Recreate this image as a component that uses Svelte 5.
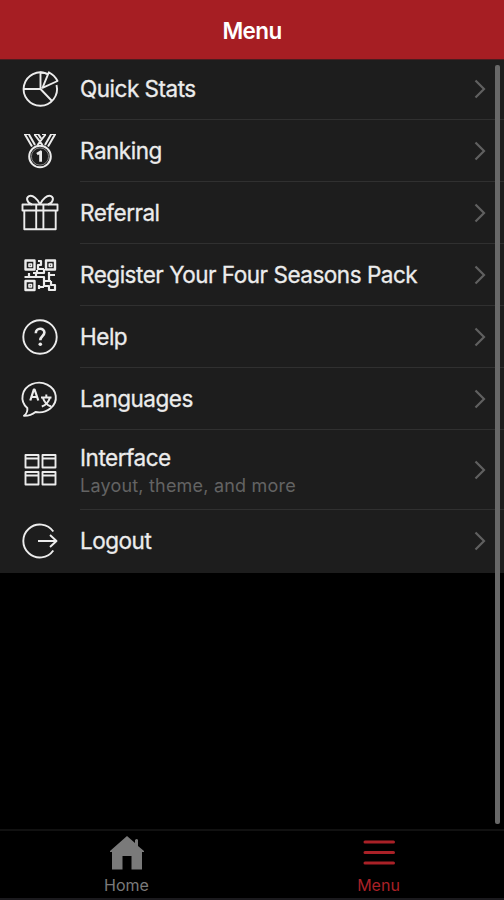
<script>
  const items = [
    { icon: 'stats', label: 'Quick Stats' },
    { icon: 'ranking', label: 'Ranking' },
    { icon: 'referral', label: 'Referral' },
    { icon: 'register', label: 'Register Your Four Seasons Pack' },
    { icon: 'help', label: 'Help' },
    { icon: 'languages', label: 'Languages' },
    { icon: 'interface', label: 'Interface', detail: 'Layout, theme, and more' },
    { icon: 'logout', label: 'Logout' }
  ];
</script>

<div class="screen">
  <header>
    <h1>Menu</h1>
  </header>

  <main>
    <ul class="menu">
      {#each items as item}
        <li class="row" class:tall={item.detail}>
          <svg class="icon" viewBox="0 0 40 40">
            {#if item.icon === 'stats'}
              <path d="M27.500 5A16.700 16.700 0 1 0 36.500 16" />
              <path d="M27.500 5Q24 3.500 20.500 3.500V20H3.500M20.500 20L32 32M22.500 18.800L28.800 3.300Q34.500 6 37.500 12Z" />
            {:else if item.icon === 'ranking'}
              <path d="M5 3.500l7 12M9 3.500l6 10.500M14.500 3.500l8 10.500M18.500 3.500l2.500 4M35 3.500l-7 12M31 3.500l-6 10.500M25.500 3.500l-8 10.500" stroke-width="2" />
              <path d="M4 3.500h6M30 3.500h6M14 3.500h5M22 3.500h4" stroke-width="1.200" />
              <circle cx="20" cy="25.500" r="10.800" stroke-width="2" />
              <circle cx="20" cy="25.500" r="8.600" stroke-width="1" opacity="0.5" />
              <path d="M17 23.200l3.600-2.400v10" stroke-width="2.800" />
            {:else if item.icon === 'referral'}
              <path d="M2.500 11.500h35v6h-35zM4.300 17.500h31.400v18.700H4.300zM16.200 11.500v24.700M23.400 11.500v24.700" />
              <path d="M20 11.500C18 6 12.500 1.500 9 3.200S7 10 12 11.500M20 11.500C22 6 27.500 1.500 31 3.200S33 10 28 11.500" />
            {:else if item.icon === 'register'}
              <path d="M5.500 5.500h9v9h-9zM26 5.500h9v9h-9zM5.500 26h9v9h-9z" stroke-width="2.400" />
              <path d="M9 9h2.500v2.500H9zM29.300 9h2.500v2.500h-2.500zM9 29.500h2.500V32H9z" stroke-width="1.600" />
              <path d="M18 6h3v4h-3v4h6M24 14v4h-7v-3M13 18h5M9 18v4h7v-3M4.500 22h5M16 22h8v4h7M29 17v9M35 20h-6M31 26v4h4v5h-6v-4h-5v-5M19 32h5M19 30v4" stroke-width="2.200" />
            {:else if item.icon === 'help'}
              <circle cx="20" cy="20" r="16.700" />
              <path d="M15.800 16.200C15.800 10.300 24.400 10.500 24.400 15.600C24.400 19 20.300 19 20.300 23.300" stroke-width="2.600" />
              <circle class="solid" cx="20.300" cy="27.300" r="1.800" />
            {:else if item.icon === 'languages'}
              <path d="M7.300 29A16.700 14.800 0 1 1 15.500 33Q10.500 37 4 36.800Q8 33.500 7.300 29Z" />
              <path d="M10.300 21.500l3.500-11h.8l3.700 11M11.700 18h5.300" stroke-width="2.200" />
              <path d="M21 18.500h10.500M26.300 15.500v3M23 19q2 6.500 8 8.500M29.800 19q-2 6.500-8 8.500" stroke-width="2" />
            {:else if item.icon === 'interface'}
              <path d="M5.500 5h13v12.500h-13zM5.500 8.500h13M22.500 5h13v12.500h-13zM22.500 8.500h13M5.500 22h13v12.500h-13zM5.500 25.500h13M22.500 22h13v12.500h-13zM22.500 25.500h13" />
            {:else if item.icon === 'logout'}
              <path d="M33.300 10.500A16.500 16.500 0 1 0 33.300 29.500M18 20h18M30 14l6.500 6l-6.500 6" />
            {/if}
          </svg>

          <div class="content">
            <div class="text">
              <span class="label">{item.label}</span>
              {#if item.detail}
                <span class="detail">{item.detail}</span>
              {/if}
            </div>
            <svg class="chevron" viewBox="0 0 12 20">
              <path d="M1.500 1.500L10 10L1.500 18.500" />
            </svg>
          </div>
        </li>
      {/each}
    </ul>
    <div class="scrollbar"></div>
  </main>

  <nav>
    <div class="tab">
      <svg viewBox="0 0 36 34">
        <path class="solid" d="M18 0L26 7V4q2-2 3 0v6L35 15v1H33V33.500H22.500V20H13.500V33.500H3V16H1v-1Z" />
      </svg>
      <span>Home</span>
    </div>
    <div class="tab active">
      <svg viewBox="0 0 36 34">
        <path d="M4 6h28.500M4 16.500h28.500M4 27h28.500" />
      </svg>
      <span>Menu</span>
    </div>
  </nav>
</div>

<style>
  :global(body) {
    background: #000;
  }

  .screen {
    display: flex;
    flex-direction: column;
    height: 900px;
    background: #000;
    font-family: Inter, 'Liberation Sans', sans-serif;
    color: #ececec;
  }

  header {
    display: flex;
    align-items: center;
    justify-content: center;
    box-sizing: border-box;
    height: 60px;
    padding-top: 2px;
    background: #a61e23;
    border-bottom: 1px solid #4b1c1f;
  }

  h1 {
    margin: 0;
    font-size: 22.5px;
    line-height: 28px;
    font-weight: 600;
    letter-spacing: -0.6px;
    color: #fff;
  }

  main {
    position: relative;
    flex: 1;
  }

  .menu {
    margin: 0;
    padding: 0;
    list-style: none;
    background: #1d1d1d;
  }

  .row {
    display: flex;
    align-items: center;
    box-sizing: border-box;
    height: 62px;
    padding-left: 20px;
  }

  .row:first-child {
    height: 60px;
  }

  .row:first-child .icon,
  .row:first-child .text,
  .row:first-child .chevron {
    margin-bottom: 2px;
  }

  .row.tall {
    height: 80px;
  }

  .row:last-child {
    height: 63px;
    padding-bottom: 2px;
  }

  svg {
    display: block;
    flex: none;
    fill: none;
    stroke: currentColor;
    stroke-width: 1.9;
    stroke-linejoin: round;
  }

  .solid {
    fill: currentColor;
    stroke: none;
  }

  .icon {
    width: 40px;
    height: 40px;
    margin-right: 20px;
  }

  .content {
    display: flex;
    flex: 1;
    align-items: center;
    justify-content: space-between;
    box-sizing: border-box;
    height: 100%;
    padding-right: 18px;
    border-bottom: 1px solid #303030;
  }

  .row:last-child .content {
    border-bottom: 0;
  }

  .text {
    display: flex;
    flex-direction: column;
  }

  .tall .text {
    padding-top: 3px;
  }

  .label {
    font-size: 22.5px;
    line-height: 28px;
    letter-spacing: -0.48px;
    -webkit-text-stroke: 0.3px currentColor;
  }

  .detail {
    font-size: 18px;
    line-height: 27px;
    letter-spacing: 0.2px;
    color: #636363;
  }

  .chevron {
    width: 12px;
    height: 20px;
    color: #606060;
    stroke-width: 2.2;
    stroke-linejoin: miter;
  }

  .scrollbar {
    position: absolute;
    top: 5px;
    right: 4px;
    width: 5px;
    height: 759px;
    border-radius: 2px;
    background: #686868;
  }

  nav {
    display: flex;
    box-sizing: border-box;
    height: 71px;
    border-top: 2px solid #111;
    border-bottom: 2px solid #1b1a1e;
  }

  .tab {
    display: flex;
    flex: 1;
    flex-direction: column;
    align-items: center;
    padding: 5px 0 0 1px;
    font-size: 16px;
    line-height: 20px;
    color: #7a7a7a;
  }

  .tab svg {
    width: 36px;
    height: 34px;
    margin-bottom: 5px;
    stroke-width: 3;
    stroke-linecap: round;
  }

  .tab.active {
    color: #a92127;
  }
</style>
